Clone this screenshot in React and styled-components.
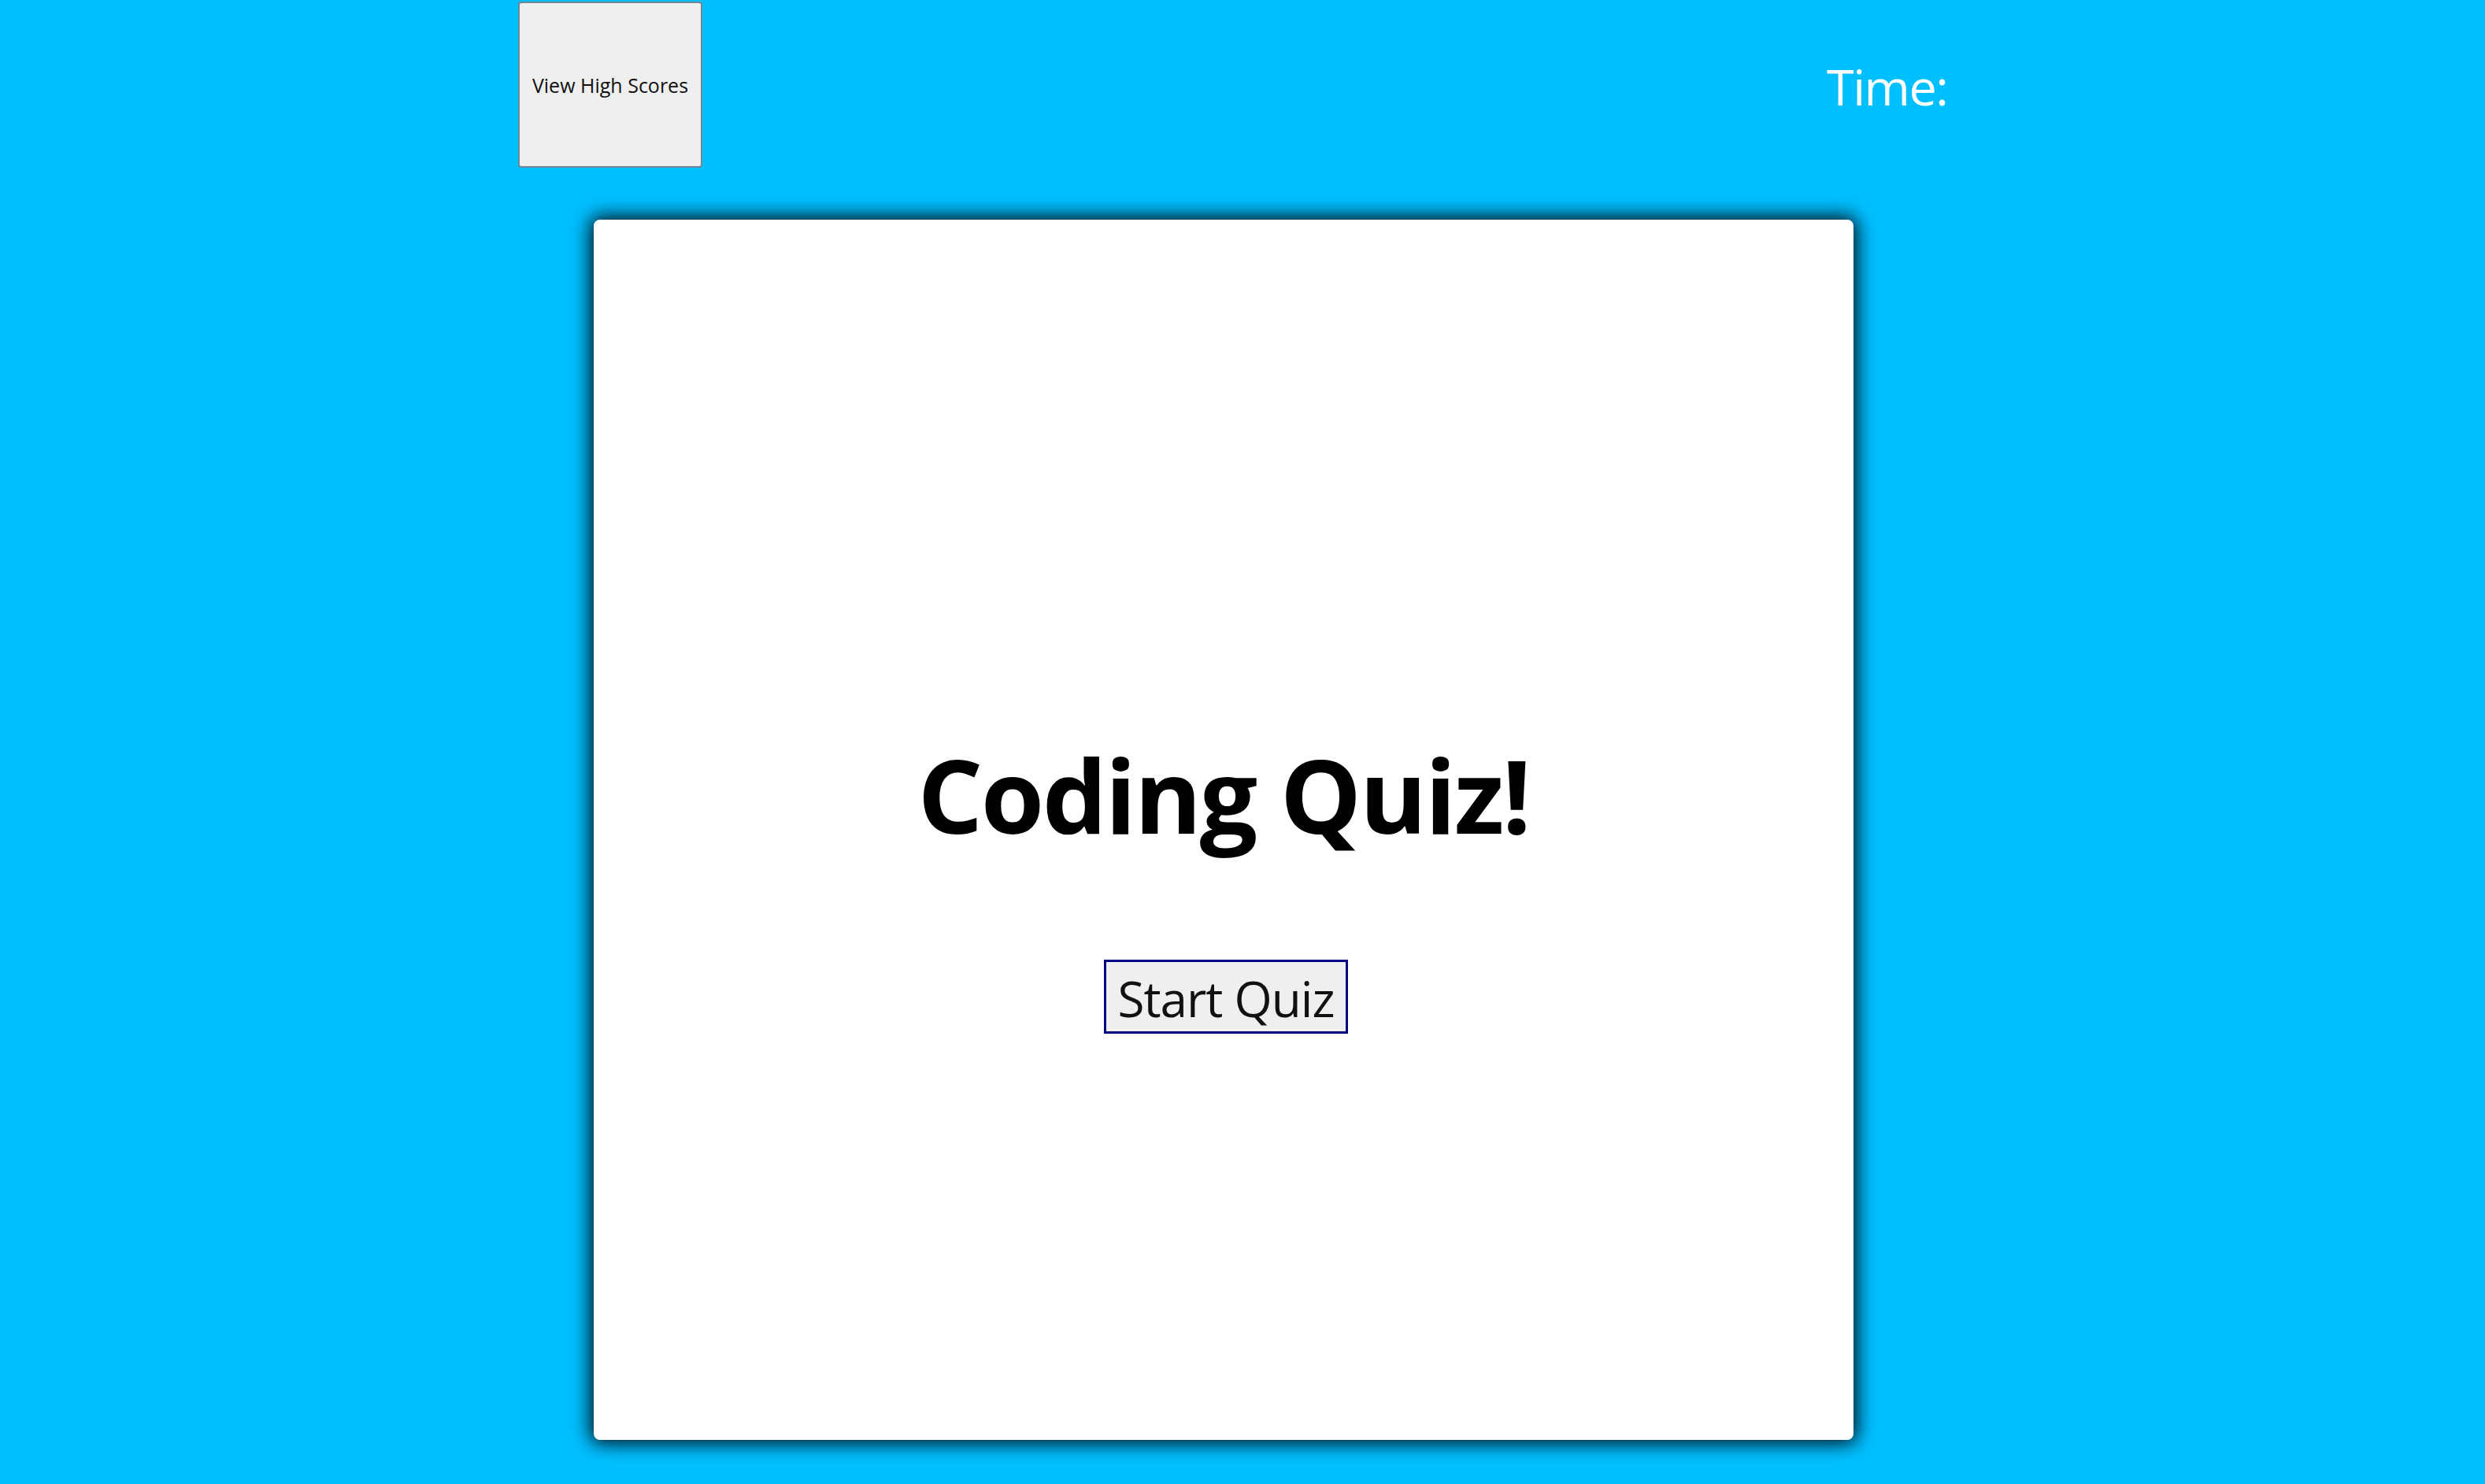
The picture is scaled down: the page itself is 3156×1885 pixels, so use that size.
import styled, { createGlobalStyle } from 'styled-components'

//#region Custom theme
const GlobalStyle = createGlobalStyle`
  html, body {
    margin: 0;
    padding: 0;
    background-color: #00bfff;
    font-family: 'Open Sans', 'Noto Sans', sans-serif;
  }
  #root {
    min-height: 1885px;
  }
`

const Page = styled.div`
  display: flex;
  flex-direction: column;
  padding-left: 658px;
`

const Header = styled.header`
  display: flex;
  align-items: flex-start;
  gap: 1428px;
  padding-top: 2px;
  height: 211px;
`

const ScoresButton = styled.button`
  width: 234px;
  height: 211px;
  box-sizing: border-box;
  border: 2px solid #6f8794;
  border-radius: 4px;
  background-color: #efefef;
  color: #111;
  font-family: inherit;
  font-size: 25px;
  cursor: pointer;
  padding: 0;
`

const Timer = styled.div`
  margin-top: 76px;
  color: white;
  font-size: 63px;
  line-height: 1;
  letter-spacing: -1.5px;
`

const Card = styled.main`
  margin: 66px 0 0 96px;
  width: 1600px;
  height: 1550px;
  box-sizing: border-box;
  background-color: white;
  border-radius: 8px;
  box-shadow: 0 0 24px 4px rgba(0, 8, 16, 1);
  display: flex;
  flex-direction: column;
  align-items: center;
  padding-top: 665px;
`

const Title = styled.h1`
  margin: 0;
  font-size: 130px;
  line-height: 1;
  font-weight: 700;
  color: black;
  letter-spacing: -2.5px;
`

const StartButton = styled.button`
  margin: 145px 0 0 6px;
  height: 94px;
  box-sizing: border-box;
  padding: 4px 14px 0;
  border: 3px solid #000080;
  background-color: #efefef;
  color: #111;
  font-family: inherit;
  font-size: 62px;
  line-height: 1;
  letter-spacing: -1px;
  cursor: pointer;
`
//#endregion

export default function App() {
  return (
    <Page>
      <GlobalStyle />
      <Header>
        <ScoresButton>View High Scores</ScoresButton>
        <Timer>Time:</Timer>
      </Header>
      <Card>
        <Title>Coding Quiz!</Title>
        <StartButton>Start Quiz</StartButton>
      </Card>
    </Page>
  )
}
